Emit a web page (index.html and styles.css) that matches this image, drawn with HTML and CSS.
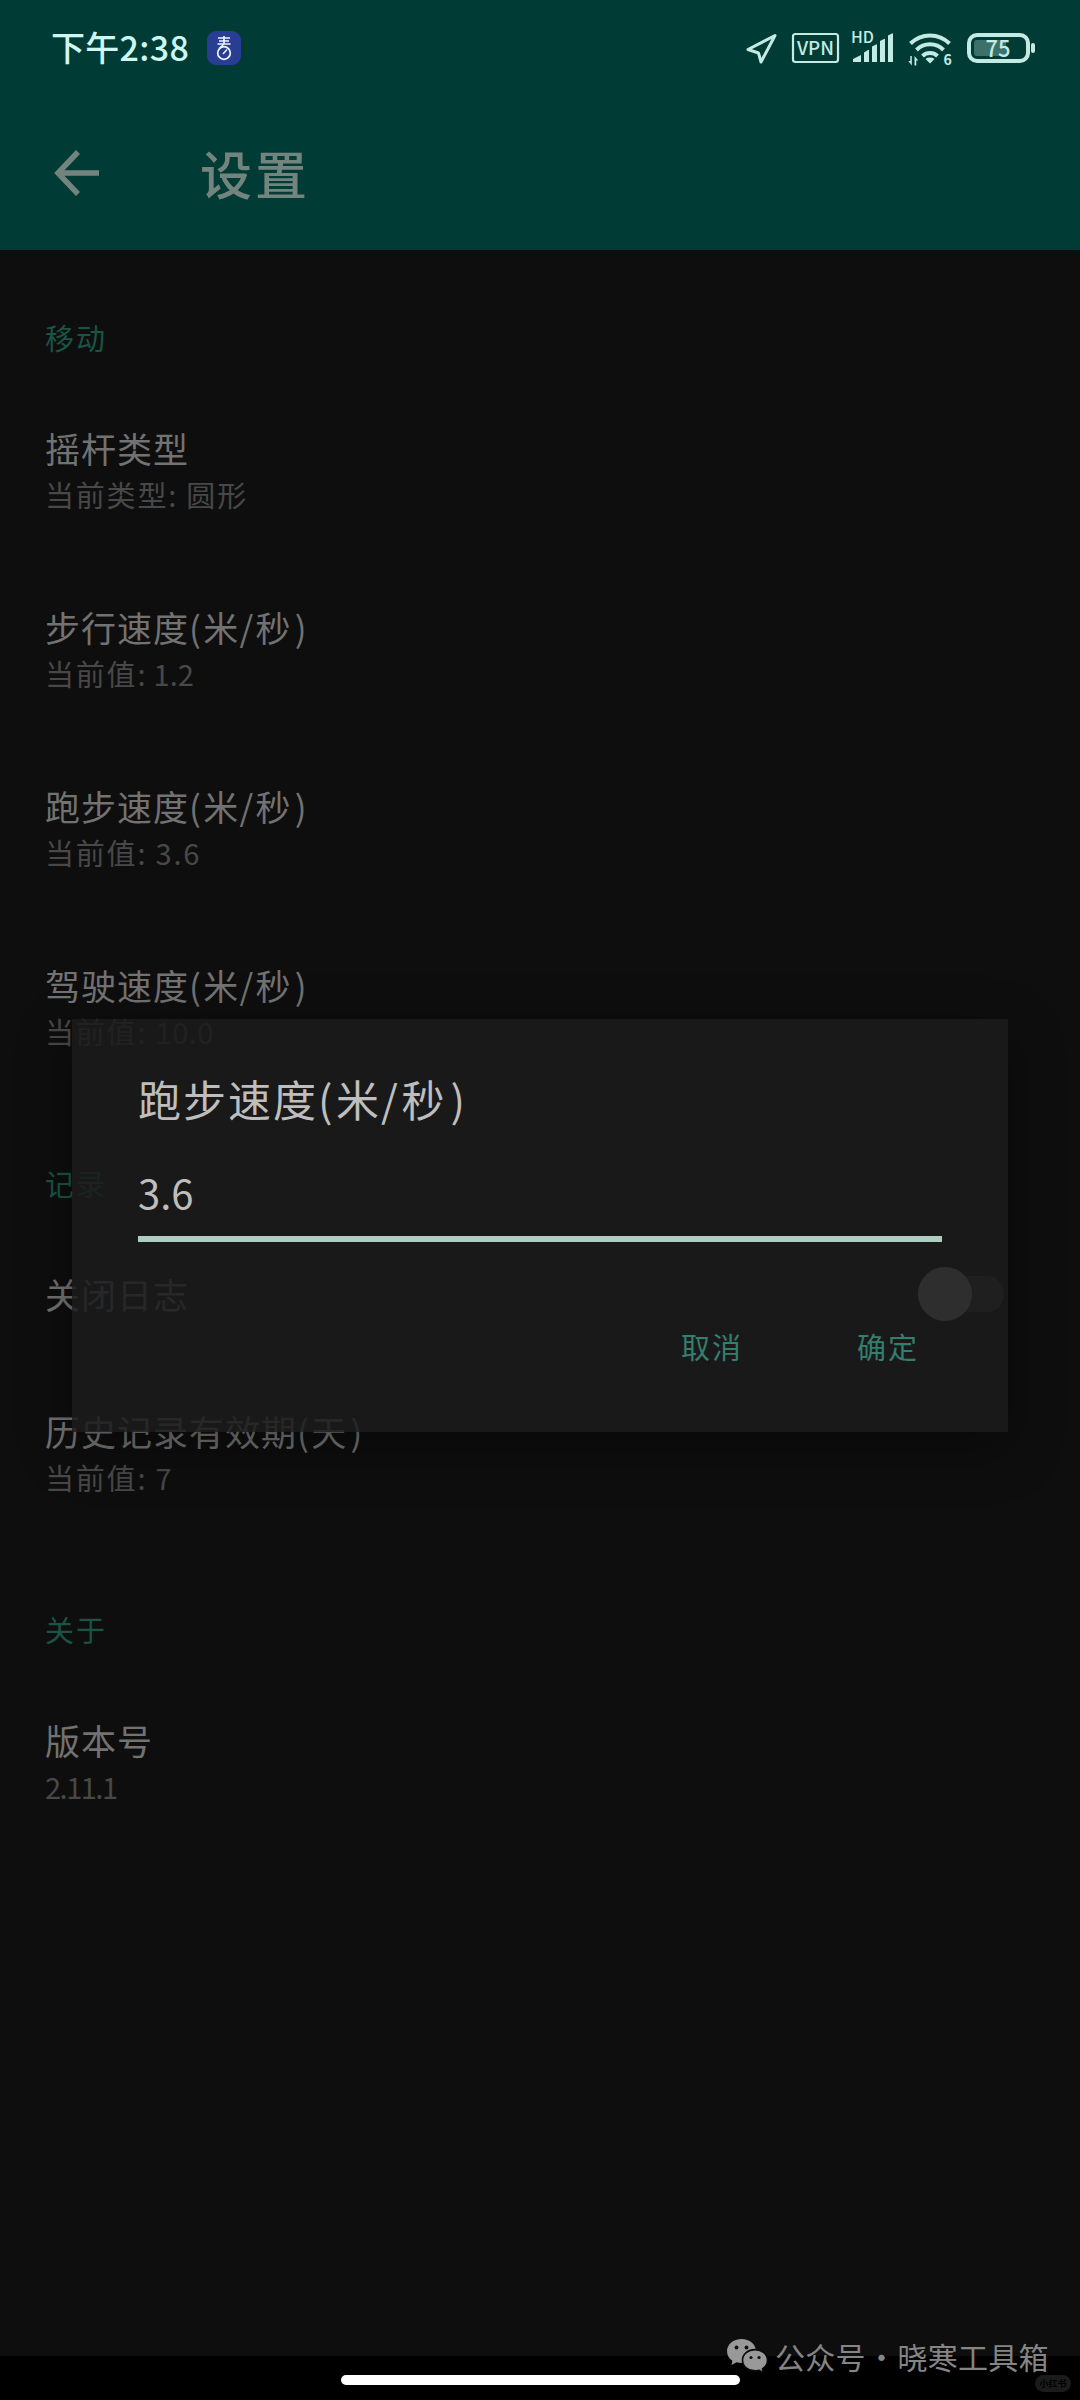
FILE: index.html
```html
<!DOCTYPE html>
<html lang="zh-CN">
<head>
<meta charset="utf-8">
<title>设置</title>
<link rel="stylesheet" href="styles.css">
</head>
<body>
<div class="screen">
  <header class="top">
    <div class="status">
      <span class="clock">下午2:38</span>
      <svg class="app-icon" width="34" height="34" viewBox="0 0 34 34">
        <rect width="34" height="34" rx="9" fill="#293d93"/>
        <g fill="none" stroke="#eef6ff" stroke-width="1.7">
          <path d="M11 7h12M12 10h10M10.500 13h13M17 5v8"/>
          <circle cx="17" cy="22" r="6.300"/>
          <path d="M12.500 17l4-3.500M16 23l4-4.500" stroke-width="1.400"/>
        </g>
      </svg>
      <div class="status-icons">
        <svg width="310" height="56" viewBox="735 20 310 56">
          <g fill="none" stroke="#c3ebe3">
            <path d="M775 35.500L748 49.500l10.500 3.500L761 62z" stroke-width="3" stroke-linejoin="round"/>
            <rect x="793" y="34" width="45" height="28" rx="2.500" stroke-width="2.200"/>
            <rect x="969" y="35" width="59" height="26" rx="8" stroke-width="4"/>
            <path d="M910.500 43.500a27.500 27.500 0 0 1 39 0M916.500 50a19 19 0 0 1 27 0M922.500 56a11 11 0 0 1 15 0" stroke-width="4"/>
          </g>
          <rect x="974" y="40" width="32" height="16" rx="3" fill="#3c7068"/>
          <g fill="#c3ebe3">
            <path d="M853 62v-3l8-4v7zM864 62V52.500l4-2.500q1-.5 1 .5V62zM872 62V46.500l4-2q1-.5 1 .5v17zM880 62V41l4-2q1-.5 1 .5V62zM888 62V35.500l4-2q1-.5 1 .5v28z"/>
            <path d="M925.500 59a6.500 5 0 0 1 9 0l-4.500 4.500z"/>
            <path d="M911.800 56v9.500l-3.500-4.500h2V56zM914.500 65.500V56l3.800 4.500h-2v5z"/>
            <rect x="1031" y="43" width="4" height="10" rx="2"/>
            <text x="797" y="55" font-size="19" font-weight="500" textLength="37" lengthAdjust="spacingAndGlyphs">VPN</text>
            <text x="851" y="43" font-size="15.500" font-weight="500" textLength="23" lengthAdjust="spacingAndGlyphs">HD</text>
            <text x="943.500" y="65" font-size="14" font-weight="700">6</text>
            <text x="985.500" y="56.500" font-size="22.500" font-weight="500" textLength="25" lengthAdjust="spacingAndGlyphs">75</text>
          </g>
        </svg>
      </div>
    </div>
    <div class="toolbar">
      <svg class="back" width="46" height="46" viewBox="0 0 46 46"><path d="M45 23H4M24 2L4 23l20 21" fill="none" stroke="#73847f" stroke-width="5.500"/></svg>
      <h1 class="page-title">设置</h1>
    </div>
  </header>

  <main class="list">
    <h2 class="category">移动</h2>
    <div class="item"><div class="name">摇杆类型</div><div class="summary">当前类型: 圆形</div></div>
    <div class="item"><div class="name">步行速度<i>(</i>米<i>/</i>秒<i class="close">)</i></div><div class="summary">当前值: <b class="tight">1.2</b></div></div>
    <div class="item"><div class="name">跑步速度<i>(</i>米<i>/</i>秒<i class="close">)</i></div><div class="summary">当前值: 3.6</div></div>
    <div class="item"><div class="name">驾驶速度<i>(</i>米<i>/</i>秒<i class="close">)</i></div><div class="summary">当前值: <b>10.0</b></div></div>
    <h2 class="category spaced">记录</h2>
    <div class="item toggle"><div class="name">关闭日志</div><span class="switch"><span class="thumb"></span></span></div>
    <div class="item"><div class="name">历史记录有效期<i>(</i>天<i class="close">)</i></div><div class="summary">当前值: 7</div></div>
    <h2 class="category spaced">关于</h2>
    <div class="item"><div class="name">版本号</div><div class="summary version">2.11.1</div></div>
  </main>

  <footer class="nav"><span class="home"></span></footer>

  <section class="dialog">
    <h2 class="dialog-title">跑步速度<i>(</i>米<i>/</i>秒<i class="close">)</i></h2>
    <div class="field">3.6</div>
    <div class="actions"><span>取消</span><span>确定</span></div>
  </section>

  <div class="watermark">
    <svg width="42" height="34" viewBox="0 0 42 34">
      <path fill="#999" d="M14.500 0C6.500 0 0 5.400 0 12.200c0 3.900 2.100 7.300 5.400 9.500L4.500 26l5-2.700c1.600.5 3.300.8 5 .8C22.500 24 29 19 29 12.200S22.500 0 14.500 0z"/>
      <path fill="#999" stroke="#0a0a0a" stroke-width="1.600" d="M28 10.600c-7 0-12.500 4.700-12.500 10.600S21 31.900 28 31.900c1.400 0 2.800-.2 4-.6l4.500 2.500-1-4c3-2 5-5 5-8.600 0-5.900-5.500-10.600-12.500-10.600z"/>
      <g fill="#111"><circle cx="9.500" cy="8.500" r="1.900"/><circle cx="19.500" cy="8.500" r="1.900"/><circle cx="24" cy="18.500" r="1.600"/><circle cx="32" cy="18.500" r="1.600"/></g>
    </svg>
    <span class="account">公众号</span><span class="dot">·</span><span>晓寒工具箱</span>
  </div>
  <div class="badge">小红书</div>
</div>
</body>
</html>
```
FILE: styles.css
```css
* { box-sizing: border-box; }
body { margin: 0; background: #0e0e0e; font-family: "Noto Sans CJK SC", sans-serif; }
h1, h2 { margin: 0; font-weight: 400; }
i { font-style: normal; letter-spacing: 2.500px; }
i.close { margin-left: 3px; }
b { font-weight: 400; letter-spacing: .5px; }
b.tight { letter-spacing: 0; margin-left: -2px; }

.screen { position: relative; display: flex; flex-direction: column; width: 1080px; height: 2400px; overflow: hidden; background: #0e0e0e; }

.top { height: 250px; background: #003c35; }
.status { display: flex; align-items: center; height: 96px; padding: 0 35px 0 51px; }
.clock { width: 156px; padding-bottom: 2px; font-size: 34px; font-weight: 500; letter-spacing: .3px; line-height: 40px; color: #cdf7f0; white-space: nowrap; }
.app-icon { flex: none; }
.status-icons { display: flex; margin-left: auto; }
.toolbar { display: flex; align-items: center; height: 154px; padding: 0 54px; gap: 100px; }
.page-title { padding-bottom: 1px; font-size: 52px; font-weight: 500; letter-spacing: 3px; line-height: 60px; color: #73847f; }

.list { flex: 1; padding: 42px 24px 0 45px; }
.category { height: 90px; font-size: 29px; letter-spacing: 2px; line-height: 90px; color: #195445; }
.spaced { margin-top: 40px; }
.item { height: 179px; padding: 43px 0; }
.name { font-size: 35px; letter-spacing: 1px; line-height: 46px; color: #727272; }
.summary { font-size: 29px; letter-spacing: 1.800px; line-height: 46px; color: #484848; }
.version { letter-spacing: -1.500px; }
.toggle { display: flex; justify-content: space-between; align-items: center; height: 137px; padding: 0 52px 5px 0; }
.switch { display: flex; align-items: center; width: 86px; height: 36px; border-radius: 18px; background: #3c3c3c; }
.thumb { flex: none; width: 54px; height: 54px; border-radius: 50%; background: #a8a8a8; }

.nav { display: flex; justify-content: center; align-items: center; height: 44px; padding-top: 4px; background: #000; }
.home { width: 399px; height: 10px; border-radius: 5px; background: #fff; }

.dialog { position: absolute; left: 72px; top: 1019px; width: 936px; height: 413px; padding: 49px 66px 0; background: rgba(28, 28, 28, .87); box-shadow: 0 16px 50px rgba(0, 0, 0, .35); }
.dialog-title { font-size: 43px; font-weight: 400; letter-spacing: 2px; line-height: 60px; color: #bebebe; }
.dialog-title i { letter-spacing: 3.500px; }
.dialog-title .close { margin-left: 4px; }
.field { height: 114px; padding-top: 38px; border-bottom: 6px solid #b0cdc2; font-size: 40px; line-height: 52px; color: #bebebe; }
.actions { display: flex; justify-content: flex-end; gap: 114px; padding: 74px 23px 0 0; font-size: 29px; letter-spacing: 2px; line-height: 60px; color: #347e6d; }

.watermark { position: absolute; left: 727px; top: 2332px; display: flex; align-items: center; height: 48px; font-size: 30px; letter-spacing: .2px; line-height: 44px; color: #858585; white-space: nowrap; }
.account { margin-left: 6px; }
.dot { display: flex; justify-content: center; width: 32px; }
.badge { position: absolute; left: 1035px; top: 2375px; width: 36px; height: 17px; border-radius: 9px; background: #1b1b1b; font-size: 9px; font-weight: 700; line-height: 17px; text-align: center; color: #000; }
```
